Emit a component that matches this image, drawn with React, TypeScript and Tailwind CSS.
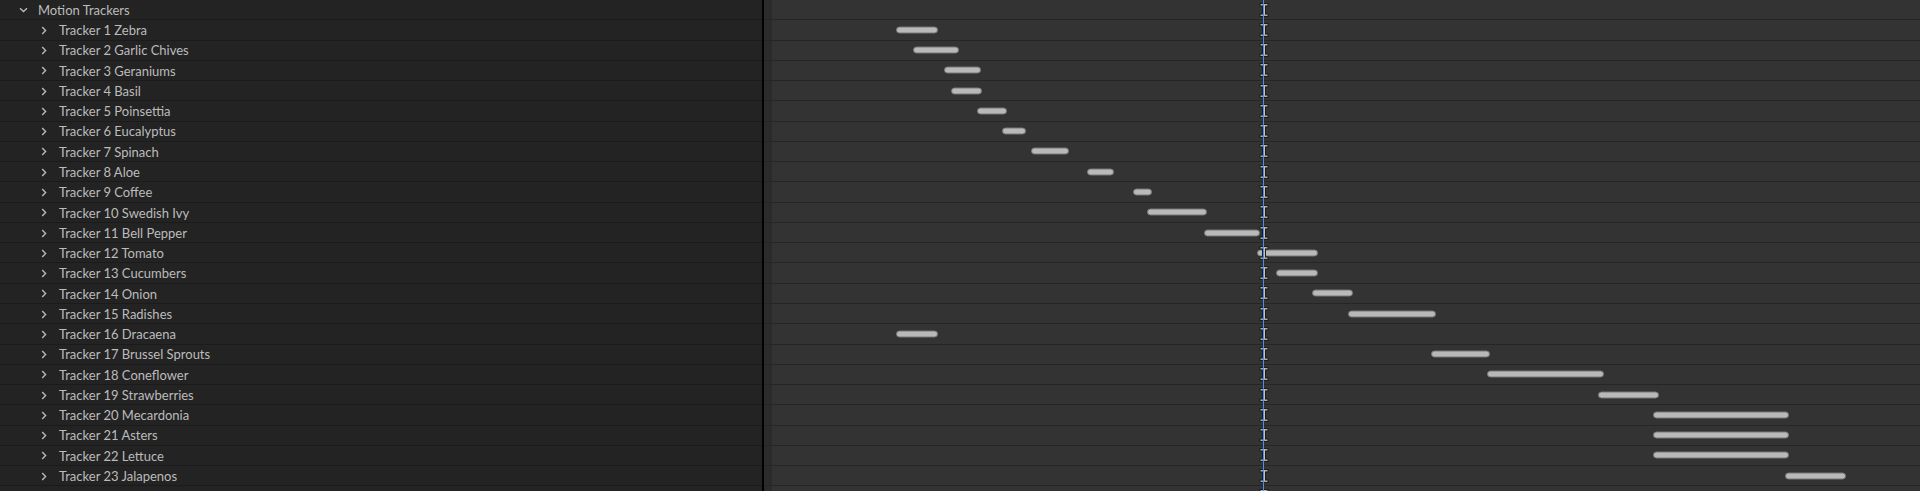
const trackers: { name: string; start: number; end: number }[] = [
  { name: "Tracker 1 Zebra", start: 896, end: 938 },
  { name: "Tracker 2 Garlic Chives", start: 913, end: 959 },
  { name: "Tracker 3 Geraniums", start: 944, end: 981 },
  { name: "Tracker 4 Basil", start: 951, end: 982 },
  { name: "Tracker 5 Poinsettia", start: 977, end: 1007 },
  { name: "Tracker 6 Eucalyptus", start: 1002, end: 1026 },
  { name: "Tracker 7 Spinach", start: 1031, end: 1069 },
  { name: "Tracker 8 Aloe", start: 1087, end: 1114 },
  { name: "Tracker 9 Coffee", start: 1133, end: 1152 },
  { name: "Tracker 10 Swedish Ivy", start: 1147, end: 1207 },
  { name: "Tracker 11 Bell Pepper", start: 1204, end: 1260 },
  { name: "Tracker 12 Tomato", start: 1257, end: 1318 },
  { name: "Tracker 13 Cucumbers", start: 1276, end: 1318 },
  { name: "Tracker 14 Onion", start: 1312, end: 1353 },
  { name: "Tracker 15 Radishes", start: 1348, end: 1436 },
  { name: "Tracker 16 Dracaena", start: 896, end: 938 },
  { name: "Tracker 17 Brussel Sprouts", start: 1431, end: 1490 },
  { name: "Tracker 18 Coneflower", start: 1487, end: 1604 },
  { name: "Tracker 19 Strawberries", start: 1598, end: 1659 },
  { name: "Tracker 20 Mecardonia", start: 1653, end: 1789 },
  { name: "Tracker 21 Asters", start: 1653, end: 1789 },
  { name: "Tracker 22 Lettuce", start: 1653, end: 1789 },
  { name: "Tracker 23 Jalapenos", start: 1785, end: 1846 },
];

// timeline area begins at x=764 on the page
const TL_LEFT = 764;
const PLAYHEAD = 1263;

function Chevron({ open }: { open?: boolean }) {
  return open ? (
    <svg width="9" height="6" viewBox="0 0 9 6" className="shrink-0">
      <path d="M1 1.2 L4.5 4.6 L8 1.2" fill="none" stroke="#b9b9b9" strokeWidth="1.4" />
    </svg>
  ) : (
    <svg width="6" height="9" viewBox="0 0 6 9" className="shrink-0">
      <path d="M1.2 1 L4.6 4.5 L1.2 8" fill="none" stroke="#b9b9b9" strokeWidth="1.4" />
    </svg>
  );
}

function Marker() {
  return (
    <svg
      width="10"
      height="15"
      viewBox="0 0 10 15"
      className="absolute top-1/2 -translate-y-1/2"
      style={{ left: PLAYHEAD - TL_LEFT - 4.5 }}
    >
      <rect x="0.5" y="0.5" width="9" height="3.5" fill="#1c1c1c" />
      <rect x="3" y="0.5" width="4" height="14" fill="#1c1c1c" />
      <rect x="0.5" y="11" width="9" height="3.5" fill="#1c1c1c" />
      <rect x="1.5" y="1.5" width="7" height="1.5" fill="#a8a8a8" />
      <rect x="4" y="1.5" width="2" height="12" fill="#c4c4c4" />
      <rect x="1.5" y="12" width="7" height="1.5" fill="#a8a8a8" />
    </svg>
  );
}

function TimelineRow({ start, end }: { start?: number; end?: number }) {
  return (
    <div className="relative h-[20.28px] border-b border-[#262626] bg-[#333333] shrink-0">
      <div className="absolute left-0 top-0 bottom-0 w-[8px] bg-[#2b2b2b]" />
      {start !== undefined && end !== undefined && (
        <div
          className="absolute top-1/2 -translate-y-1/2 h-[7px] rounded-full bg-[#b9b9b9] border border-[#777]"
          style={{ left: start - TL_LEFT, width: end - start }}
        />
      )}
      <Marker />
    </div>
  );
}

export default function App() {
  return (
    <div
      className="flex w-[1920px] h-[491px] overflow-hidden bg-[#232323] text-[13px] text-[#bcbcbc]"
      style={{ fontFamily: "Lato, 'Noto Sans', sans-serif" }}
    >
      <div className="w-[762px] shrink-0 flex flex-col">
        <div className="h-[20.28px] border-b border-[#1b1b1b] flex items-center shrink-0">
          <div className="w-[38px] flex justify-end pr-[10px] pt-[1px]">
            <Chevron open />
          </div>
          <span className="pt-[2px]">Motion Trackers</span>
        </div>
        {trackers.map((t) => (
          <div key={t.name} className="h-[20.28px] border-b border-[#1b1b1b] flex items-center shrink-0">
            <div className="w-[59px] flex justify-end pr-[12px] pt-[1px]">
              <Chevron />
            </div>
            <span className="pt-[2px]">{t.name}</span>
          </div>
        ))}
        <div className="h-[20.28px] shrink-0" />
      </div>
      <div className="w-[2px] shrink-0 bg-black" />
      <div className="relative flex-1 flex flex-col">
        <TimelineRow />
        {trackers.map((t) => (
          <TimelineRow key={t.name} start={t.start} end={t.end} />
        ))}
        <TimelineRow />
        <div
          className="absolute top-0 bottom-0 w-px bg-[#4a8ee6]"
          style={{ left: PLAYHEAD - TL_LEFT }}
        />
      </div>
    </div>
  );
}
